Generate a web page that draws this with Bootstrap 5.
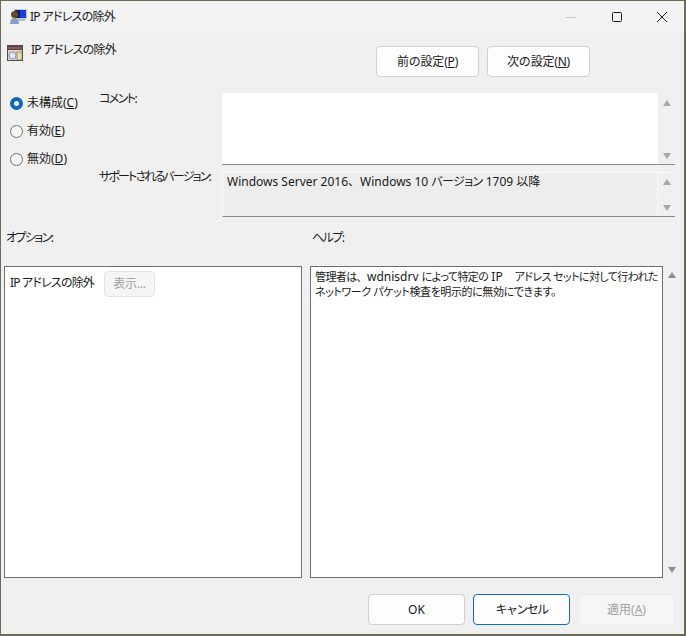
<!DOCTYPE html>
<html lang="ja"><head><meta charset="utf-8">
<link href="https://cdn.jsdelivr.net/npm/bootstrap@5.3.0/dist/css/bootstrap.min.css" rel="stylesheet">
<style>
html,body{height:636px;overflow:hidden;background:#6a6c58}
body{font-family:"Noto Sans","Noto Sans CJK JP",sans-serif;font-feature-settings:"palt";font-size:12px;line-height:16px;color:#1a1a1a;padding:1px 2px 2px 1px}
.win{width:683px;height:633px;background:#f0f0f0;display:flex;flex-direction:column}
.tbar{height:31px;background:#f3f3f3;padding-left:8px;flex:none;white-space:nowrap}
.wctl{width:46px;height:31px}
.wctl.last{width:44px}
.tico{margin-right:3px}
.ttl{letter-spacing:-.7px}
.kana{letter-spacing:-1.6px}
.kana2{letter-spacing:-1.85px}
.kana3{letter-spacing:-.6px}
.wide{font-feature-settings:normal}
.pane{flex:1;display:flex;flex-direction:column;padding:0 3px;min-height:0}
.head{height:61px;flex:none}
.hdtitle{padding:10px 0 0 3px;white-space:nowrap}
.hdico{margin-top:3px}
.wbtn{height:31px;background:#fdfdfd;border:1px solid #d0d0d0;border-radius:4px;font-size:12px;color:#1a1a1a;padding:0;line-height:28px;white-space:nowrap}
.w-a{width:103px;letter-spacing:-.2px}
.hdbtns{padding-top:14px;padding-right:91px;gap:8px}
.upper{height:124px;flex:none}
.radios{width:95px;padding-left:6px;flex:none;margin-top:-4px}
.rd{height:28px;display:flex;align-items:center;gap:4px;white-space:nowrap}
.rdot{width:13px;height:13px;border-radius:50%;border:1px solid #6f6f6f;background:#f5f5f5;flex:none}
.rdot.on{border:4px solid #0f67b8;background:#fff}
.labs{width:123px;flex:none;white-space:nowrap;margin-top:-2px}
.lab1{height:78px}
.boxes{width:453px;flex:none}
.sbox{display:flex;border-bottom:1px solid #8a8a8a}
.sb1{height:72px;background:#fff;margin-bottom:7px}
.sb2{height:45px;background:#ededed;border-top:1px solid #fafafa;border-left:1px solid #fafafa}
.sbtxt{flex:1;padding:1px 4px;white-space:nowrap}
.sbar{width:17px;background:#f0f0f0;display:flex;flex-direction:column;justify-content:space-between;align-items:center;padding:7px 0 5px;flex:none}
.sb2 .sbar{width:18px;border-left:1px solid #fafafa;padding:6px 0 5px}
.tup{width:0;height:0;border-left:4px solid transparent;border-right:4px solid transparent;border-bottom:6px solid #a8a8a8}
.tdn{width:0;height:0;border-left:4px solid transparent;border-right:4px solid transparent;border-top:6px solid #a8a8a8}
.lower{height:361px;flex:none}
.caps{height:49px;padding:13px 0 0 2px;white-space:nowrap}
.capb{width:306px;flex:none}
.opt{width:298px;height:312px;background:#fff;border:1px solid #6e6e6e;padding:4px 5px;margin-right:8px;flex:none;white-space:nowrap}
.optl{padding-top:4px;letter-spacing:-.8px}
.hlp{width:353px;height:312px;background:#fff;border:1px solid #6e6e6e;padding:2px 4px;white-space:nowrap;flex:none;line-height:15px;font-size:11px}
.ln1{letter-spacing:-.6px}
.ln2{letter-spacing:-.4px}
.lat{letter-spacing:0;font-size:12px}
.vsb{width:18px;height:312px;display:flex;flex-direction:column;justify-content:space-between;align-items:center;padding:6px 0 5px;flex:none}
.vsb .tup{border-bottom-color:#8f8f8f}
.vsb .tdn{border-top-color:#8f8f8f}
.disb{width:51px;height:26px;margin-left:10px;border:1px solid #e3e3e3;border-radius:4px;background:#f5f5f5;color:#a0a0a0;text-align:center;line-height:24px;letter-spacing:-.2px}
.foot{flex:1;justify-content:flex-end;padding:16px 6px 0 0;gap:8px}
.fb{width:97px}
.fprim{border:1px solid #0f6cbd}
.fdis{background:#f6f6f6;border-color:#ececec;color:#a0a0a0}
</style></head><body>
<div class="win">
 <div class="tbar d-flex align-items-center">
  <svg width="18" height="18" viewBox="0 0 18 18" class="tico"><rect x="5" y="1" width="13" height="10" fill="#c4c8ce"/><rect x="6" y="2" width="11" height="8" fill="#1a3fd8"/><rect x="6" y="2" width="5" height="8" fill="#0c1f70"/><rect x="9" y="11" width="7" height="2" fill="#b4b8c0"/><circle cx="5.500" cy="6.500" r="3.500" fill="#6b4a28"/><path d="M1 16c0-4 2-6 4.500-6s4.500 2 4.500 6z" fill="#7ea3c8"/></svg>
  <span class="ttl">IP アドレスの除外</span>
  <div class="ms-auto d-flex">
   <div class="wctl d-flex align-items-center justify-content-center"><svg width="10" height="10"><path d="M0 5.500h10" stroke="#c4c4c4"/></svg></div>
   <div class="wctl d-flex align-items-center justify-content-center"><svg width="10" height="10"><rect x=".5" y=".5" width="9" height="9" rx="1" fill="none" stroke="#1a1a1a"/></svg></div>
   <div class="wctl last d-flex align-items-center justify-content-center"><svg width="10" height="10"><path d="M0 0l10 10M10 0L0 10" stroke="#1a1a1a"/></svg></div>
  </div>
 </div>
 <div class="pane">
  <div class="head d-flex">
   <div class="hdtitle d-flex gap-2">
    <svg width="16" height="16" viewBox="0 0 16 16" class="hdico"><rect width="16" height="16" fill="#41505a"/><rect x="1" y="2" width="14" height="2" fill="#b04a3a"/><rect x="1" y="5" width="14" height="10" fill="#d8d8cc"/><circle cx="5.500" cy="10.500" r="3.500" fill="#e8e8f4" stroke="#8a8aa0"/><rect x="10" y="7" width="5" height="8" fill="#e8dfa8" stroke="#6e6a50" stroke-width=".6"/></svg>
    <span class="ttl">IP アドレスの除外</span>
   </div>
   <div class="ms-auto d-flex align-items-start hdbtns">
    <button class="wbtn w-a" type="button">前の設定(<u>P</u>)</button>
    <button class="wbtn w-a" type="button">次の設定(<u>N</u>)</button>
   </div>
  </div>
  <div class="upper d-flex">
   <div class="radios">
    <div class="rd"><span class="rdot on"></span><span>未構成(<u>C</u>)</span></div>
    <div class="rd"><span class="rdot"></span><span>有効(<u>E</u>)</span></div>
    <div class="rd"><span class="rdot"></span><span>無効(<u>D</u>)</span></div>
   </div>
   <div class="labs">
    <div class="lab1 kana">コメント:</div>
    <div class="kana2">サポートされるバージョン:</div>
   </div>
   <div class="boxes">
    <div class="sbox sb1"><div class="sbtxt"></div><div class="sbar"><span class="tup"></span><span class="tdn"></span></div></div>
    <div class="sbox sb2"><div class="sbtxt">Windows Server 2016<span class="wide">、</span>Windows 10 <span class="kana3">バージョン</span> 1709 以降</div><div class="sbar"><span class="tup"></span><span class="tdn"></span></div></div>
   </div>
  </div>
  <div class="lower">
   <div class="caps d-flex"><div class="capb kana">オプション:</div><div class="kana">ヘルプ:</div></div>
   <div class="d-flex">
    <div class="opt d-flex align-items-start"><span class="optl">IP アドレスの除外</span><div class="disb">表示...</div></div>
    <div class="hlp"><span class="ln1">管理者は<span class="wide">、</span><span class="lat">wdnisdrv </span>によって特定の<span class="lat"> IP　</span>アドレス セットに対して行われた</span><br><span class="ln2">ネットワーク パケット検査を明示的に無効にできます。</span></div>
    <div class="vsb"><span class="tup"></span><span class="tdn"></span></div>
   </div>
  </div>
  <div class="foot d-flex">
   <button class="wbtn fb" type="button">OK</button>
   <button class="wbtn fb fprim kana" type="button">キャンセル</button>
   <button class="wbtn fb fdis" type="button">適用(<u>A</u>)</button>
  </div>
 </div>
</div>
</body></html>
